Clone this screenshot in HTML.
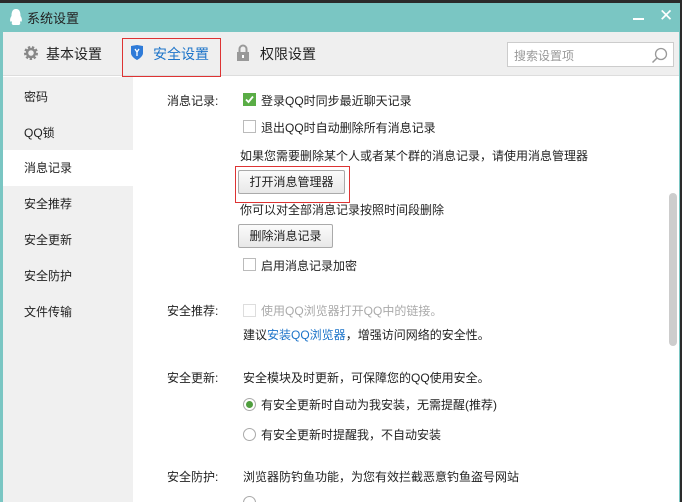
<!DOCTYPE html>
<html><head><meta charset="utf-8"><style>
*{margin:0;padding:0;box-sizing:border-box}
html,body{width:682px;height:502px;overflow:hidden}
body{background:#2a2a2a;font-family:"Liberation Sans","Microsoft YaHei","Noto Sans CJK SC",sans-serif;font-size:12px;color:#222;position:relative}
.win{position:absolute;left:0;top:3px;width:680px;height:499px;background:#fff;border-left:3px solid #7ac6c3;border-right:1px solid #7ac6c3;overflow:hidden}
.title{position:absolute;left:0;top:0;right:0;height:29px;background:#7ac6c3;color:#222;font-size:13px}
.tabs{position:absolute;left:0;top:29px;right:0;height:44px;background:#efefef;border-bottom:1px solid #ddd}
.side{position:absolute;left:0;top:74px;width:130px;bottom:0;background:#f0f0f0}
.side div{position:absolute;left:21px;font-size:12px}
.a{position:absolute;white-space:nowrap}
.cb{position:absolute;width:13px;height:13px;border:1px solid #bbb;background:#fff}
.btn{position:absolute;border:1px solid #aaa;border-radius:2px;background:linear-gradient(#fbfbfb,#e8e8e8);text-align:center;line-height:22px}
.rd{position:absolute;width:13px;height:13px;border:1px solid #aaa;border-radius:50%;background:#fff}
</style></head><body>
<div class="win">
<div class="title">
<svg style="position:absolute;left:6px;top:5px" width="14" height="18" viewBox="0 0 14 18"><path d="M7 1C3 1 2.5 5 2.5 8C1 10 0.5 13 2 14C3 13 3 13 3 13C3 15 2 16 4 17L10 17C12 16 11 15 11 13C11 13 11 13 12 14C13.5 13 13 10 11.5 8C11.5 5 11 1 7 1Z" fill="#fff"/></svg>
<span class="a" style="left:24px;top:5px">系统设置</span>
<div class="a" style="left:630px;top:15px;width:11px;height:2px;background:#fff"></div>
<span class="a" style="left:656px;top:3px;color:#fff;font-size:17px">✕</span>
</div>
<div class="tabs">
<svg style="position:absolute;left:20px;top:13px" width="16" height="16" viewBox="0 0 16 16"><circle cx="8" cy="8" r="5.5" fill="none" stroke="#888" stroke-width="3" stroke-dasharray="2.2 1.6"/><circle cx="8" cy="8" r="4" fill="none" stroke="#888" stroke-width="2.5"/></svg>
<span class="a" style="left:43px;top:12px;font-size:14px">基本设置</span>
<div class="a" style="left:119px;top:6px;width:99px;height:39px;border:1px solid #d33"></div>
<svg style="position:absolute;left:127px;top:12px" width="14" height="17" viewBox="0 0 14 17"><path d="M1 2L7 1L13 2L13 9C13 13 7 16 7 16C7 16 1 13 1 9Z" fill="#2f7bd8"/><path d="M5 5L7 8L9 5M7 8L7 12" stroke="#fff" stroke-width="1.3" fill="none"/></svg>
<span class="a" style="left:150px;top:12px;font-size:14px;color:#1d74c9">安全设置</span>
<svg style="position:absolute;left:233px;top:12px" width="14" height="17" viewBox="0 0 14 17"><path d="M3.5 8V5A3.5 3.5 0 0 1 10.5 5V8" stroke="#999" stroke-width="2" fill="none"/><rect x="1" y="8" width="12" height="9" fill="#999"/><rect x="6" y="11" width="2" height="3" fill="#fff"/></svg>
<span class="a" style="left:257px;top:12px;font-size:14px">权限设置</span>
<div class="a" style="left:504px;top:10px;width:167px;height:25px;border:1px solid #ccc;background:#fff"><span class="a" style="left:6px;top:4px;color:#999">搜索设置项</span>
<svg style="position:absolute;left:143px;top:4px" width="17" height="17" viewBox="0 0 17 17"><circle cx="10" cy="7" r="5.5" stroke="#999" fill="none" stroke-width="1.3"/><path d="M6 11L1.5 15.5" stroke="#999" stroke-width="1.5"/></svg></div>
</div>
<div class="side">
<div style="top:11px">密码</div>
<div style="top:47px">QQ锁</div>
<div style="left:0;top:73px;width:130px;height:36px;background:#fff"></div>
<div style="top:82px">消息记录</div>
<div style="top:118px">安全推荐</div>
<div style="top:154px">安全更新</div>
<div style="top:190px">安全防护</div>
<div style="top:226px">文件传输</div>
</div>
<div style="position:absolute;left:0;top:-2px">
<span class="a" style="left:164px;top:91px">消息记录:</span>
<div class="cb" style="left:240px;top:92px;background:#5aad46;border-color:#5aad46"><svg width="11" height="11" viewBox="0 0 11 11" style="position:absolute;left:0;top:0"><path d="M2 5.5L4.5 8L9 2.5" stroke="#fff" stroke-width="1.8" fill="none"/></svg></div>
<span class="a" style="left:258px;top:91px">登录QQ时同步最近聊天记录</span>
<div class="cb" style="left:240px;top:119px"></div>
<span class="a" style="left:258px;top:118px">退出QQ时自动删除所有消息记录</span>
<span class="a" style="left:237px;top:146px">如果您需要删除某个人或者某个群的消息记录，请使用消息管理器</span>
<div class="a" style="left:232px;top:165px;width:115px;height:37px;border:1px solid #d33"></div>
<div class="btn" style="left:235px;top:169px;width:107px;height:24px">打开消息管理器</div>
<span class="a" style="left:237px;top:200px">你可以对全部消息记录按照时间段删除</span>
<div class="btn" style="left:235px;top:223px;width:95px;height:24px">删除消息记录</div>
<div class="cb" style="left:240px;top:257px"></div>
<span class="a" style="left:258px;top:256px">启用消息记录加密</span>
<span class="a" style="left:164px;top:301px">安全推荐:</span>
<div class="cb" style="left:240px;top:303px;border-color:#ddd"></div>
<span class="a" style="left:258px;top:301px;color:#aaa">使用QQ浏览器打开QQ中的链接。</span>
<span class="a" style="left:240px;top:325px">建议<span style="color:#1d74c9">安装QQ浏览器</span>，增强访问网络的安全性。</span>
<span class="a" style="left:164px;top:368px">安全更新:</span>
<span class="a" style="left:240px;top:368px">安全模块及时更新，可保障您的QQ使用安全。</span>
<div class="rd" style="left:240px;top:397px"><div style="position:absolute;left:2px;top:2px;width:7px;height:7px;border-radius:50%;background:#4f9e3e"></div></div>
<span class="a" style="left:258px;top:395px">有安全更新时自动为我安装，无需提醒(推荐)</span>
<div class="rd" style="left:240px;top:427px"></div>
<span class="a" style="left:258px;top:425px">有安全更新时提醒我，不自动安装</span>
<span class="a" style="left:164px;top:467px">安全防护:</span>
<span class="a" style="left:240px;top:467px">浏览器防钓鱼功能，为您有效拦截恶意钓鱼盗号网站</span>
<div class="rd" style="left:240px;top:495px"></div>
<div class="a" style="left:666px;top:192px;width:8px;height:153px;border-radius:4px;background:#cdcdcd"></div>
</div>
</div>
</body></html>
